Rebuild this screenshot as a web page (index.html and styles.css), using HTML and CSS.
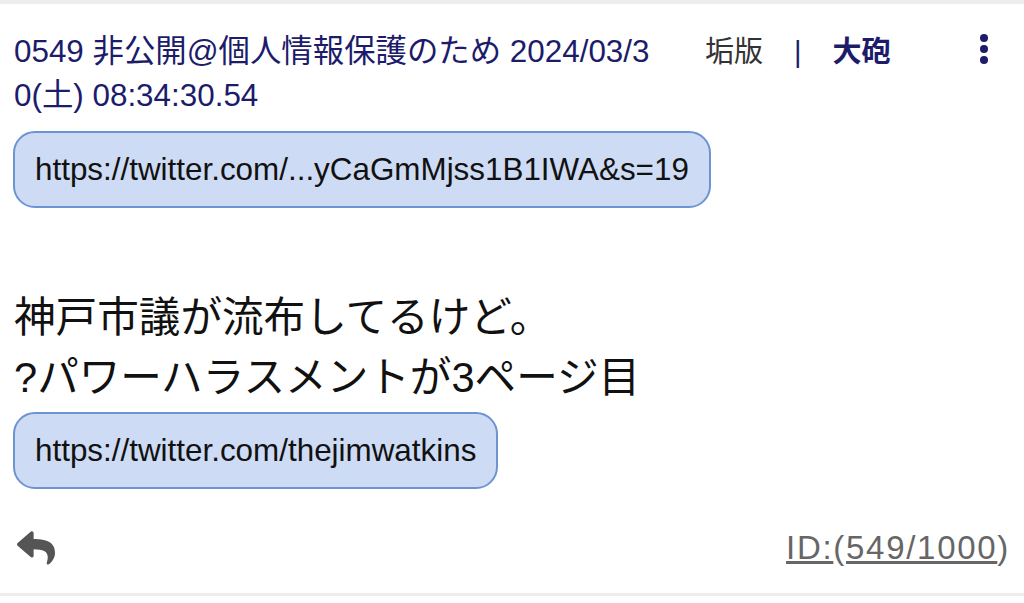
FILE: index.html
```html
<!DOCTYPE html>
<html lang="ja">
<head>
  <meta charset="UTF-8" />
  <meta name="viewport" content="width=device-width, initial-scale=1.0"/>
  <title>0549</title>
  <link rel="stylesheet" href="styles.css">
</head>
<body>
  <div class="post">
    <div class="post-head">
      <div class="post-meta">0549 非公開@個人情報保護のため 2024/03/30(土) 08:34:30.54</div>
      <div class="post-tools">
        <span class="aka">垢版</span>
        <span class="sep">|</span>
        <span class="taiho">大砲</span>
      </div>
      <div class="kebab">
        <svg width="10" height="32" viewBox="0 0 10 32">
          <circle cx="5" cy="5" r="4" />
          <circle cx="5" cy="16" r="4" />
          <circle cx="5" cy="27" r="4" />
        </svg>
      </div>
    </div>

    <div class="post-body">
      <a class="url-pill" href="#">https://twitter.com/...yCaGmMjss1B1IWA&amp;s=19</a>
      <p class="msg">神戸市議が流布してるけど。<br>?パワーハラスメントが3ページ目</p>
      <a class="url-pill" href="#">https://twitter.com/thejimwatkins</a>
    </div>

    <div class="post-foot">
      <!-- reply -->
      <svg class="reply" width="38" height="38" viewBox="0 0 512 512">
        <path d="M8.3 189.8L184.3 37.9C199.7 24.5 224 35.3 224 56v80.1c160.6 1.8 288 34 288 186.2 0 61.4-39.6 122.3-83.3 154.1-13.7 9.9-33.1-2.5-28.1-18.6 45.3-145-21.5-183.5-176.6-185.7V360c0 20.7-24.3 31.5-39.7 18.2l-176-152c-11.1-9.6-11.1-26.8 0-36.4z"/>
      </svg>
      <div class="post-id"><a href="#">ID:</a>(<a href="#">549/1000</a>)</div>
    </div>
  </div>
</body>
</html>
```

FILE: styles.css
```css
body {
  margin: 0;
  background: white;
  font-family: "Liberation Sans", "Noto Sans CJK JP", sans-serif;
}
.post {
  border-top: 4px solid #ededed;
  border-bottom: 3px solid #ededed;
}
.post-head {
  display: flex;
  align-items: flex-start;
  padding: 26px 0 0 14px;
}
.post-meta {
  width: 640px;
  font-size: 31.4px;
  line-height: 44px;
  color: #1c1c6b;
  word-break: break-all;
}
.post-tools {
  margin-left: 51px;
  font-size: 29px;
  line-height: 44px;
  color: #333;
  display: flex;
  gap: 31px;
}
.sep {
  color: #1c1c6b;
}
.taiho {
  font-weight: bold;
  color: #1c1c6b;
}
.kebab {
  margin-left: auto;
  margin-right: 35px;
  padding-top: 3px;
  fill: #1c1c6b;
}
.post-body {
  padding: 13px 13px 0;
}
.url-pill {
  display: inline-block;
  padding: 18px 20px;
  border: 2px solid #6e93d1;
  border-radius: 22px;
  background: #cedbf4;
  color: #111;
  font-size: 31.4px;
  line-height: 37px;
  text-decoration: none;
}
.msg {
  margin: 80px 0 4px 1px;
  font-size: 41.6px;
  line-height: 60px;
  color: #111;
}
.post-foot {
  display: flex;
  align-items: center;
  justify-content: space-between;
  height: 66px;
  margin: 26px 0 12px;
  padding: 0 14px 0 17px;
}
.reply {
  fill: #555;
}
.post-id {
  font-size: 33px;
  letter-spacing: 1.7px;
  color: #666;
}
.post-id a {
  color: #666;
}
```
